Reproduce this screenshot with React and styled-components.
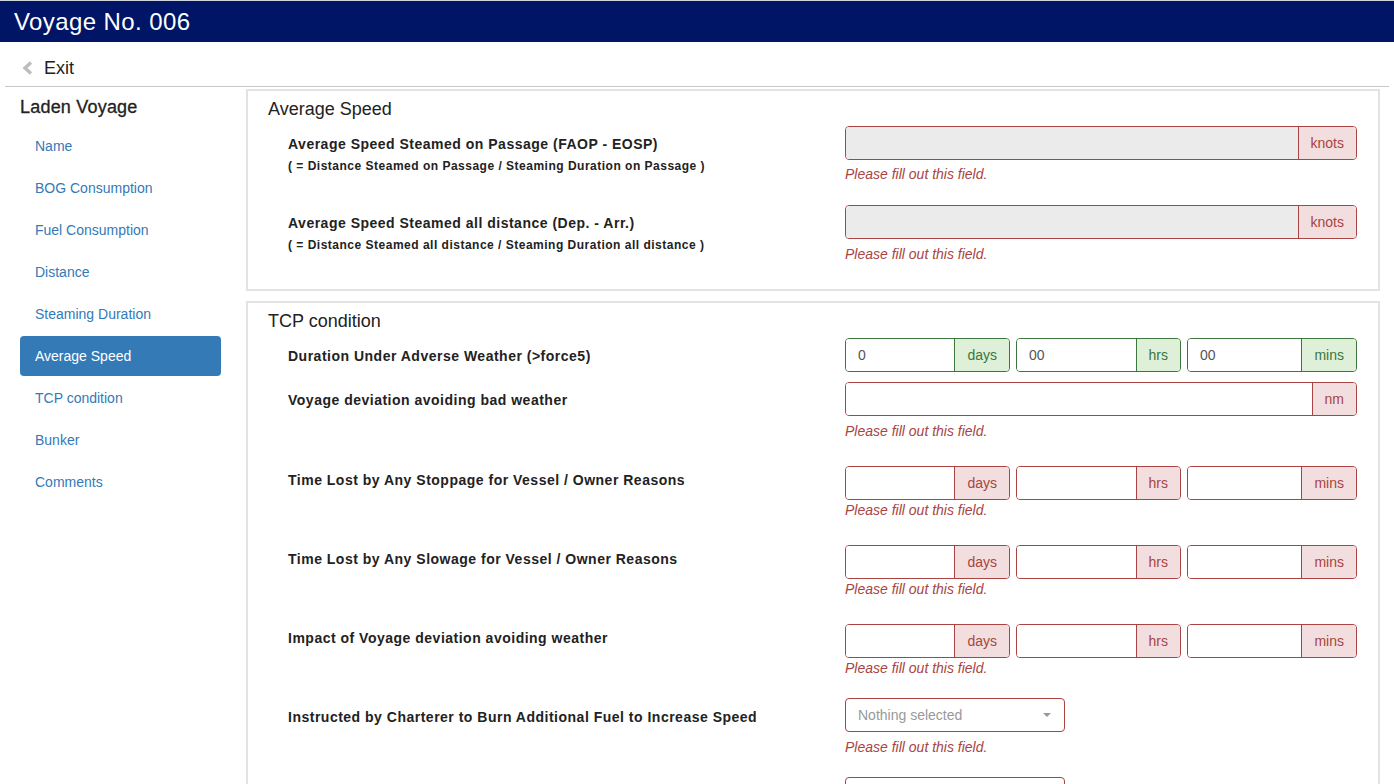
import React from 'react';
import styled, { createGlobalStyle } from 'styled-components';

const GlobalStyle = createGlobalStyle`
  body {
    margin: 0;
    font-family: "Liberation Sans", Arial, sans-serif;
    font-size: 14px;
    color: #333;
    background: #fff;
  }
  * { box-sizing: border-box; }
`;

const NAV = [
  'Name',
  'BOG Consumption',
  'Fuel Consumption',
  'Distance',
  'Steaming Duration',
  'Average Speed',
  'TCP condition',
  'Bunker',
  'Comments',
];

const HELP = 'Please fill out this field.';

export default function App() {
  return (
    <>
      <GlobalStyle />
      <Header>
        <HeaderTitle>Voyage No. 006</HeaderTitle>
      </Header>
      <ExitBar>
        <ChevronIcon />
        <ExitText>Exit</ExitText>
      </ExitBar>
      <Divider />
      <Body>
        <Sidebar>
          <SideTitle>Laden Voyage</SideTitle>
          <NavList>
            {NAV.map(item => (
              <NavItem key={item} $active={item === 'Average Speed'}>
                {item}
              </NavItem>
            ))}
          </NavList>
        </Sidebar>
        <Main>
          <Panel $pb={26}>
            <PanelTitle>Average Speed</PanelTitle>
            <FormRow $mb={22}>
              <Label>
                Average Speed Steamed on Passage (FAOP - EOSP)
                <SubLabel>( = Distance Steamed on Passage / Steaming Duration on Passage )</SubLabel>
              </Label>
              <div>
                <InputGroup $state="error">
                  <Field $disabled />
                  <Addon $state="error">knots</Addon>
                </InputGroup>
                <Help $mt={5}>{HELP}</Help>
              </div>
            </FormRow>
            <FormRow $mb={0}>
              <Label>
                Average Speed Steamed all distance (Dep. - Arr.)
                <SubLabel>( = Distance Steamed all distance / Steaming Duration all distance )</SubLabel>
              </Label>
              <div>
                <InputGroup $state="error">
                  <Field $disabled />
                  <Addon $state="error">knots</Addon>
                </InputGroup>
                <Help $mt={6}>{HELP}</Help>
              </div>
            </FormRow>
          </Panel>

          <Panel $pb={0}>
            <PanelTitle>TCP condition</PanelTitle>
            <FormRow $mb={10}>
              <Label>Duration Under Adverse Weather (&gt;force5)</Label>
              <Duration state="success" values={['0', '00', '00']} />
            </FormRow>
            <FormRow $mb={26}>
              <Label>Voyage deviation avoiding bad weather</Label>
              <div>
                <InputGroup $state="error">
                  <Field />
                  <Addon $state="error">nm</Addon>
                </InputGroup>
                <Help $mt={6}>{HELP}</Help>
              </div>
            </FormRow>
            <FormRow $mb={26}>
              <Label $pt={4}>Time Lost by Any Stoppage for Vessel / Owner Reasons</Label>
              <div>
                <Duration state="error" values={['', '', '']} />
                <Help $mt={1}>{HELP}</Help>
              </div>
            </FormRow>
            <FormRow $mb={26}>
              <Label $pt={4}>Time Lost by Any Slowage for Vessel / Owner Reasons</Label>
              <div>
                <Duration state="error" values={['', '', '']} />
                <Help $mt={1}>{HELP}</Help>
              </div>
            </FormRow>
            <FormRow $mb={21}>
              <Label $pt={4}>Impact of Voyage deviation avoiding weather</Label>
              <div>
                <Duration state="error" values={['', '', '']} />
                <Help $mt={1}>{HELP}</Help>
              </div>
            </FormRow>
            <FormRow $mb={21}>
              <Label $pt={9}>Instructed by Charterer to Burn Additional Fuel to Increase Speed</Label>
              <div>
                <Select>
                  <span>Nothing selected</span>
                  <Caret />
                </Select>
                <Help $mt={6}>{HELP}</Help>
              </div>
            </FormRow>
            <FormRow $mb={20}>
              <Label />
              <div>
                <Select>
                  <span />
                  <Caret />
                </Select>
              </div>
            </FormRow>
          </Panel>
        </Main>
      </Body>
    </>
  );
}

function Duration({ state, values }) {
  const units = ['days', 'hrs', 'mins'];
  return (
    <DurationGrid>
      {units.map((unit, i) => (
        <InputGroup key={unit} $state={state}>
          <Field value={values[i]} readOnly />
          <Addon $state={state}>{unit}</Addon>
        </InputGroup>
      ))}
    </DurationGrid>
  );
}

function ChevronIcon() {
  return (
    <svg width="14" height="14" viewBox="0 0 14 14">
      <polyline
        points="10,1.5 4,7 10,12.5"
        fill="none"
        stroke="#bdbdbd"
        strokeWidth="3.4"
        strokeLinejoin="miter"
      />
    </svg>
  );
}

const COLORS = {
  error: { border: '#a94442', bg: '#f2dede', text: '#a94442' },
  success: { border: '#3c763d', bg: '#dff0d8', text: '#3c763d' },
};

const Header = styled.header`
  height: 42px;
  border-top: 1px solid #cfd3dc;
  background: #001565;
  display: flex;
  align-items: center;
  padding-left: 14px;
`;

const HeaderTitle = styled.h1`
  margin: 0;
  color: #fff;
  font-size: 24px;
  font-weight: normal;
  letter-spacing: 0.4px;
  line-height: 40px;
`;

const ExitBar = styled.div`
  height: 44px;
  display: flex;
  align-items: center;
  gap: 9px;
  padding: 8px 0 0 21px;
`;

const ExitText = styled.span`
  font-size: 18px;
  color: #222;
`;

const Divider = styled.hr`
  margin: 0 5px 0 5px;
  border: 0;
  border-top: 1px solid #c8c8c8;
`;

const Body = styled.div`
  display: flex;
  align-items: flex-start;
`;

const Sidebar = styled.aside`
  width: 246px;
  flex-shrink: 0;
  padding: 0 25px 0 20px;
`;

const SideTitle = styled.h3`
  margin: 9px 0 8px;
  font-size: 18px;
  font-weight: 500;
  line-height: 22px;
  letter-spacing: 0.2px;
  color: #222;
  -webkit-text-stroke: 0.3px #222;
`;

const NavList = styled.ul`
  list-style: none;
  margin: 0;
  padding: 0;
  display: flex;
  flex-direction: column;
  gap: 2px;
`;

const NavItem = styled.li`
  height: 40px;
  padding: 10px 15px;
  line-height: 20px;
  border-radius: 4px;
  color: ${p => (p.$active ? '#fff' : '#337ab7')};
  background: ${p => (p.$active ? '#337ab7' : 'transparent')};
`;

const Main = styled.main`
  flex: 1;
  padding: 2px 14px 0 0;
  display: flex;
  flex-direction: column;
  gap: 10px;
`;

const Panel = styled.section`
  border: 2px solid #e3e3e3;
  padding-bottom: ${p => p.$pb}px;
`;

const PanelTitle = styled.h4`
  margin: 0 0 6px;
  padding: 7px 0 0 20px;
  font-size: 18px;
  font-weight: normal;
  line-height: 22px;
  color: #222;
`;

const FormRow = styled.div`
  display: grid;
  grid-template-columns: 1fr 512px;
  column-gap: 15px;
  padding: 0 21px 0 40px;
  margin-bottom: ${p => p.$mb}px;
`;

const Label = styled.div`
  padding-top: ${p => (p.$pt ?? 8)}px;
  font-weight: bold;
  line-height: 20px;
  letter-spacing: 0.5px;
  color: #222;
`;

const SubLabel = styled.div`
  margin-top: 4px;
  font-size: 12px;
  line-height: 16px;
  letter-spacing: 0.5px;
`;

const DurationGrid = styled.div`
  display: grid;
  grid-template-columns: 165px 165px 1fr;
  column-gap: 6px;
`;

const InputGroup = styled.div`
  display: flex;
  height: 34px;
  border: 1px solid ${p => COLORS[p.$state].border};
  border-radius: 4px;
  overflow: hidden;
`;

const Field = styled.input`
  flex: 1;
  min-width: 0;
  border: 0;
  outline: none;
  padding: 0 12px;
  font-family: inherit;
  font-size: 14px;
  color: #555;
  background: ${p => (p.$disabled ? '#ebebeb' : '#fff')};
`;

const Addon = styled.span`
  display: flex;
  align-items: center;
  padding: 0 12px;
  border-left: 1px solid ${p => COLORS[p.$state].border};
  background: ${p => COLORS[p.$state].bg};
  color: ${p => COLORS[p.$state].text};
`;

const Help = styled.div`
  margin-top: ${p => p.$mt}px;
  line-height: 18px;
  font-style: italic;
  color: #a94442;
`;

const Select = styled.div`
  width: 220px;
  height: 34px;
  border: 1px solid #a94442;
  border-radius: 4px;
  display: flex;
  align-items: center;
  justify-content: space-between;
  padding: 0 12px 0 12px;
  color: #999;
`;

const Caret = styled.span`
  width: 0;
  height: 0;
  margin-right: 1px;
  border-left: 4px solid transparent;
  border-right: 4px solid transparent;
  border-top: 4px solid #999;
`;
